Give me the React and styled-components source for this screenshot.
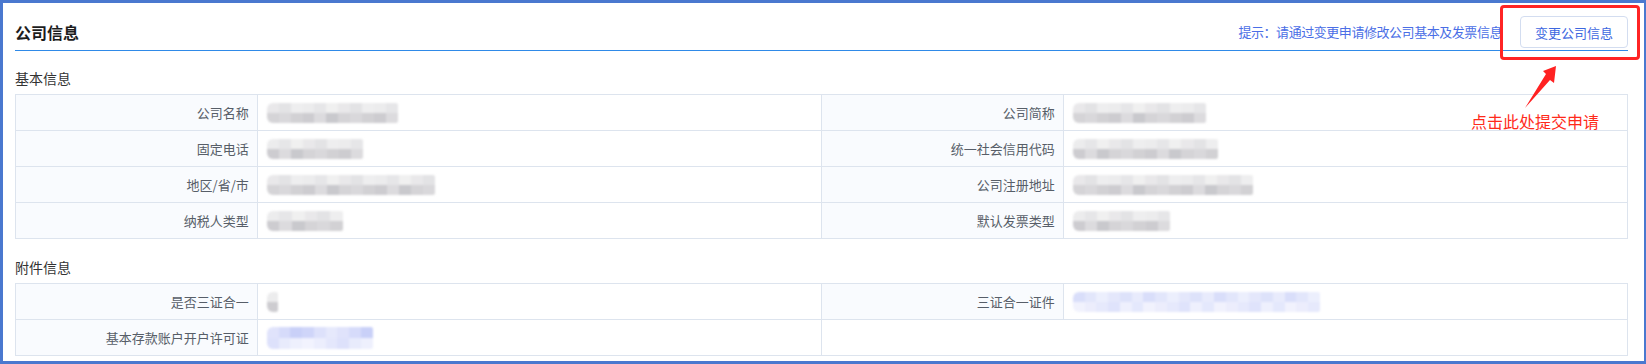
import styled, { createGlobalStyle } from "styled-components"

const GlobalStyle = createGlobalStyle`
  html, body {
    margin: 0;
    padding: 0;
    background: #ffffff;
  }
  body {
    font-family: "Microsoft YaHei", "Noto Sans CJK SC", "Noto Sans", sans-serif;
  }
`

const Frame = styled.div`
  position: relative;
  box-sizing: border-box;
  width: 1646px;
  height: 364px;
  border: 3px solid #4a78cf;
  border-right-width: 2px;
  padding: 0 16px 0 12px;
  background: #ffffff;
`

const Header = styled.div`
  box-sizing: border-box;
  height: 48px;
  display: flex;
  justify-content: space-between;
  align-items: flex-end;
  padding-bottom: 2px;
  border-bottom: 1px solid #2f8ae8;
`

const Title = styled.h2`
  margin: 0;
  font-size: 16px;
  font-weight: bold;
  line-height: 32px;
  color: #1d1d1d;
`

const Actions = styled.div`
  display: flex;
  align-items: center;
  gap: 18px;
`

const Hint = styled.span`
  font-size: 13px;
  letter-spacing: -0.45px;
  color: #4a6ee6;
  line-height: 32px;
`

const Button = styled.button`
  box-sizing: border-box;
  width: 108px;
  height: 32px;
  border: 1px solid #d3ddf0;
  border-radius: 4px;
  background: #ffffff;
  color: #3d67df;
  font-family: inherit;
  font-size: 13px;
  cursor: pointer;
`

const SectionTitle = styled.h3`
  margin: ${p => p.$top}px 0 6px;
  font-size: 14px;
  font-weight: normal;
  line-height: 20px;
  color: #333333;
`

const Table = styled.table`
  width: 100%;
  border-collapse: collapse;
  table-layout: fixed;
  font-size: 13px;
`

const Label = styled.td`
  box-sizing: border-box;
  width: 15%;
  height: 36px;
  padding: 0 8px 0 0;
  border: 1px solid #dde4ee;
  background: #f9fbfe;
  color: #575e68;
  text-align: right;
`

const Value = styled.td`
  box-sizing: border-box;
  width: 35%;
  height: 36px;
  padding: 0 0 0 9px;
  border: 1px solid #dde4ee;
  background: #ffffff;
  vertical-align: middle;
`

const Mosaic = styled.span`
  display: flex;
  flex-direction: column;
  width: ${p => p.$w}px;
  height: ${p => p.$h || 20}px;
  filter: blur(0.8px);
  border-radius: 6px 2px 2px 6px;
  overflow: hidden;
`

const MosaicRow = styled.span`
  display: flex;
  flex: 1;
`

const Cell = styled.span`
  flex: 1;
  min-width: 0;
`

const palettes = {
  grey: [
    ["#ececed", "#e6e6e8", "#f0f0f0", "#e9e8ea", "#e3e3e5", "#eeeeef"],
    ["#d9d8db", "#d2d1d4", "#cdccd0", "#dcdbde", "#c9c9cd", "#d5d4d7"],
  ],
  blue: [
    ["#e4e7fb", "#dde2fa", "#e8ebfc", "#d9defa", "#e2e6fb", "#eceffd"],
    ["#ecedfc", "#e6e9fc", "#dfe3fb", "#eef0fd", "#e4e8fc", "#f1f2fd"],
  ],
  deep: [
    ["#e0e3fb", "#d6dbfa", "#c9d0f8", "#cfd5f9", "#dde1fb", "#e6e9fc"],
    ["#eceefd", "#e4e7fc", "#dde1fb", "#e8ebfc", "#eef0fd", "#f2f3fe"],
  ],
}

const Blur = ({ w, h, tone = "grey", seed = 1 }) => {
  const cols = Math.max(1, Math.round(w / 12))
  const pal = palettes[tone]
  return (
    <Mosaic $w={w} $h={h}>
      {pal.map((row, r) => (
        <MosaicRow key={r}>
          {Array.from({ length: cols }, (_, i) => (
            <Cell
              key={i}
              style={{ background: row[(i * 7 + seed * 3 + r * 2) % row.length] }}
            />
          ))}
        </MosaicRow>
      ))}
    </Mosaic>
  )
}

const basic = [
  ["公司名称", 131, "公司简称", 133],
  ["固定电话", 96, "统一社会信用代码", 145],
  ["地区/省/市", 168, "公司注册地址", 180],
  ["纳税人类型", 76, "默认发票类型", 97],
]

const RedBox = styled.div`
  position: absolute;
  left: 1497px;
  top: 2px;
  width: 140px;
  height: 55px;
  box-sizing: border-box;
  border: 3px solid #ff2424;
  border-radius: 4px;
  pointer-events: none;
`

const Arrow = styled.svg`
  position: absolute;
  left: 1512px;
  top: 55px;
  width: 50px;
  height: 55px;
`

const Note = styled.span`
  position: absolute;
  left: 1468px;
  top: 106px;
  font-size: 16px;
  line-height: 24px;
  color: #ff2a1a;
  white-space: nowrap;
`

const App = () => {
  return (
    <>
      <GlobalStyle />
      <Frame>
        <Header>
          <Title>公司信息</Title>
          <Actions>
            <Hint>提示：请通过变更申请修改公司基本及发票信息</Hint>
            <Button>变更公司信息</Button>
          </Actions>
        </Header>

        <SectionTitle $top={17}>基本信息</SectionTitle>
        <Table>
          <tbody>
            {basic.map(([l1, w1, l2, w2], i) => (
              <tr key={l1}>
                <Label>{l1}</Label>
                <Value><Blur w={w1} seed={i + 1} /></Value>
                <Label>{l2}</Label>
                <Value><Blur w={w2} seed={i + 5} /></Value>
              </tr>
            ))}
          </tbody>
        </Table>

        <SectionTitle $top={18}>附件信息</SectionTitle>
        <Table>
          <tbody>
            <tr>
              <Label>是否三证合一</Label>
              <Value><Blur w={11} seed={2} /></Value>
              <Label>三证合一证件</Label>
              <Value><Blur w={247} tone="blue" seed={3} /></Value>
            </tr>
            <tr>
              <Label>基本存款账户开户许可证</Label>
              <Value><Blur w={106} h={22} tone="deep" seed={4} /></Value>
              <Value colSpan={2} />
            </tr>
          </tbody>
        </Table>

        <RedBox />
        <Arrow viewBox="0 0 50 55">
          <polygon
            points="41,8 28,13 31,16 10,50 35,22 39,25"
            fill="#ff2222"
          />
        </Arrow>
        <Note>点击此处提交申请</Note>
      </Frame>
    </>
  )
}

export default App
